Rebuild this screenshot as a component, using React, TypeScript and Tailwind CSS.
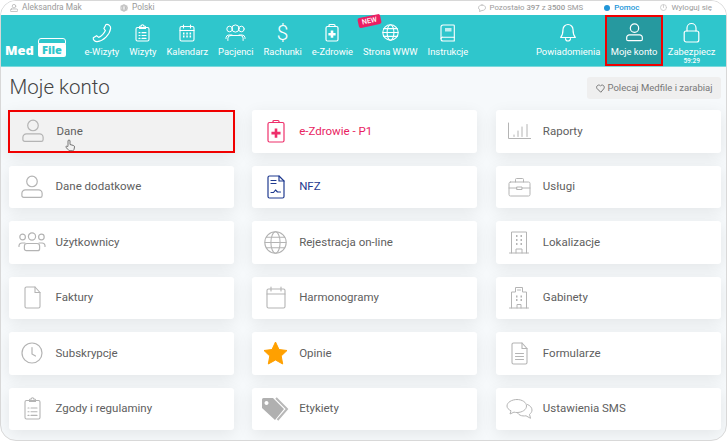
import React from "react";

const S = ({ w, h, children, className = "", sw = 1.1 }: { w: number; h: number; children: React.ReactNode; className?: string; sw?: number }) => (
  <svg width={w} height={h} viewBox={`0 0 ${w} ${h}`} fill="none" stroke="currentColor" strokeWidth={sw} strokeLinecap="round" strokeLinejoin="round" className={className}>
    {children}
  </svg>
);

const Person = ({ w = 22, h = 24, sw = 1.2 }: { w?: number; h?: number; sw?: number }) => (
  <S w={w} h={h} sw={sw}>
    <circle cx={w / 2} cy={h * 0.27} r={h * 0.22} />
    <path d={`M${w * 0.2} ${h * 0.62}H${w * 0.8}a${w * 0.16} ${h * 0.15} 0 0 1 ${w * 0.16} ${h * 0.15}v${h * 0.08}a${w * 0.08} ${h * 0.08} 0 0 1 -${w * 0.08} ${h * 0.08}H${w * 0.12}a${w * 0.08} ${h * 0.08} 0 0 1 -${w * 0.08} -${h * 0.08}v-${h * 0.08}a${w * 0.16} ${h * 0.15} 0 0 1 ${w * 0.16} -${h * 0.15}z`} />
  </S>
);

const Users = ({ w = 28, h = 20, sw = 1.2 }: { w?: number; h?: number; sw?: number }) => (
  <S w={w} h={h} sw={sw}>
    <circle cx={w / 2} cy={4.5} r={3.6} />
    <circle cx={4.6} cy={5} r={2.8} />
    <circle cx={w - 4.6} cy={5} r={2.8} />
    <path d={`M${w / 2 - 5} 11.5h10a2.6 2.6 0 0 1 2.6 2.6v2.6a2 2 0 0 1-2 2H${w / 2 - 5.6}a2 2 0 0 1-2-2v-2.6a2.6 2.6 0 0 1 2.6-2.6z`} />
    <path d={`M1 14.5v-1a3 3 0 0 1 3-2.5h3`} />
    <path d={`M${w - 1} 14.5v-1a3 3 0 0 0-3-2.5h-3`} />
  </S>
);

const ClipList = ({ w = 16, h = 22, sw = 1.1 }: { w?: number; h?: number; sw?: number }) => (
  <S w={w} h={h} sw={sw}>
    <rect x="1" y="3.5" width={w - 2} height={h - 4.5} rx="1.5" />
    <path d={`M${w / 2 - 3} 3.5V3a1 1 0 0 1 1-1h.8a1.2 1.2 0 0 1 2.4 0h.8a1 1 0 0 1 1 1v1.5H${w / 2 - 3}z`} />
    <path d={`M4 ${h * 0.48}h1M7 ${h * 0.48}h${w - 11}M4 ${h * 0.64}h1M7 ${h * 0.64}h${w - 11}M4 ${h * 0.8}h1M7 ${h * 0.8}h${w - 11}`} />
  </S>
);

const ClipPlus = ({ w = 15, h = 21, fill = "currentColor" }: { w?: number; h?: number; fill?: string }) => (
  <S w={w} h={h} sw={1.2}>
    <rect x="1" y="3.5" width={w - 2} height={h - 4.5} rx="1.5" />
    <path d={`M${w / 2 - 3} 3.5V2.5a1 1 0 0 1 1-1h4a1 1 0 0 1 1 1v1`} />
    <path d={`M${w / 2} ${h * 0.4}v${h * 0.38}M${w / 2 - h * 0.19} ${h * 0.59}h${h * 0.38}`} stroke={fill} strokeWidth={2.6} strokeLinecap="butt" />
  </S>
);

const Globe = ({ d = 22, sw = 1.1 }: { d?: number; sw?: number }) => (
  <S w={d} h={d} sw={sw}>
    <circle cx={d / 2} cy={d / 2} r={d / 2 - 0.8} />
    <ellipse cx={d / 2} cy={d / 2} rx={d * 0.2} ry={d / 2 - 0.8} />
    <path d={`M1 ${d / 2}H${d - 1}M${d * 0.1} ${d * 0.27}H${d * 0.9}M${d * 0.1} ${d * 0.73}H${d * 0.9}`} />
  </S>
);

const Lock = () => (
  <S w={17} h={21} sw={1.2}>
    <rect x="1.2" y="9" width="14.6" height="11" rx="2" />
    <path d="M4 9V6a4.500 4.500 0 0 1 9 0v3" />
  </S>
);

const navLeft = [
  { t: "e-Wizyty", i: <S w={20} h={20} sw={1.2}><path d="M14 1.500c2.500-.6 5 1.500 4.600 4C17.800 11.500 11.500 18 5.200 18.600c-2.300.2-4.300-1.800-3.900-3.800l3.300-2.100 2.100 1.700c2.800-1.200 5.400-4 6.700-6.800l-1.500-2.100z" /></S> },
  { t: "Wizyty", i: <ClipList w={15} h={18} /> },
  { t: "Kalendarz", i: <S w={16} h={18} sw={1.1}><rect x="1" y="2.500" width="14" height="14.500" rx="1.500" /><path d="M1 6.500h14M4.500 1v3M11.500 1v3" /><path d="M4 9.500h1.500M7.300 9.500h1.500M10.600 9.500h1.500M4 12.500h1.500M7.300 12.500h1.500M10.600 12.500h1.500" strokeWidth={1.8} strokeLinecap="butt" /></S> },
  { t: "Pacjenci", i: <Users w={21} h={17} sw={1} /> },
  { t: "Rachunki", i: <span className="text-[21px] leading-[20px] font-light">$</span> },
  { t: "e-Zdrowie", i: <ClipPlus w={14} h={19} /> },
  { t: "Strona WWW", i: <Globe d={17} />, badge: true },
  { t: "Instrukcje", i: <S w={15} h={18} sw={1.1}><path d="M3 1h10.500a.8.8 0 0 1 .8.800V17H3a2 2 0 0 1-2-2V3a2 2 0 0 1 2-2z" /><path d="M1 14.500a1.800 1.800 0 0 1 2-1.300h11.300" /><rect x="5" y="4" width="6.500" height="3.500" fill="currentColor" stroke="none" opacity=".7" /></S> },
];

type Card = { t: string; i: React.ReactNode; c?: string; ic?: string };
const Bar = () => (
  <S w={24} h={18} sw={1}>
    <path d="M1.500 1v15.500H24" />
    <path d="M7 13v1.500M11 9v5.500M15 5v9.500M20 2.500v12" />
  </S>
);
const cards: Card[] = [
  { t: "Dane", i: <Person /> },
  { t: "e-Zdrowie - P1", i: <ClipPlus w={18} h={24} />, c: "text-[#e8235f]", ic: "text-[#ee2f6b]" },
  { t: "Raporty", i: <Bar /> },
  { t: "Dane dodatkowe", i: <Person /> },
  {
    t: "NFZ",
    i: (
      <S w={18} h={24} sw={1.2}>
        <path d="M2.500 1h9.500l5 5v15.500a1.500 1.500 0 0 1-1.500 1.500h-13A1.500 1.500 0 0 1 1 21.500V2.500A1.500 1.500 0 0 1 2.500 1z" />
        <path d="M12 1v5h5M4 5.500h5M4 8.500h5M4 17.500h2.500l2-2.500 2 2h3" />
      </S>
    ),
    c: "text-[#1f3a8f]",
    ic: "text-[#1f3a8f]",
  },
  {
    t: "Usługi",
    i: (
      <S w={23} h={20} sw={1}>
        <rect x="1" y="5" width="21" height="14" rx="1.500" />
        <path d="M7.500 5V2.500a1 1 0 0 1 1-1h6a1 1 0 0 1 1 1V5M1 11h8M14 11h8M9 10h5v2.500H9z" />
      </S>
    ),
  },
  { t: "Użytkownicy", i: <Users /> },
  { t: "Rejestracja on-line", i: <Globe d={23} sw={1.1} /> },
  {
    t: "Lokalizacje",
    i: (
      <S w={20} h={23} sw={1}>
        <path d="M2.500 22V1h15v21M.5 22h19" />
        <path d="M7 22v-4h6v4" />
        <path d="M7 5h1.500M11.500 5H13M7 9h1.500M11.500 9H13M7 13h1.500M11.500 13H13" strokeWidth={2} strokeLinecap="butt" />
      </S>
    ),
  },
  {
    t: "Faktury",
    i: (
      <S w={17} h={23} sw={1.1}>
        <path d="M2.500 1H11l5 5.500V20.500a1.500 1.500 0 0 1-1.500 1.500h-12A1.500 1.500 0 0 1 1 20.500V2.500A1.500 1.500 0 0 1 2.500 1z" />
        <path d="M11 1v5.500h5" />
      </S>
    ),
  },
  {
    t: "Harmonogramy",
    i: (
      <S w={20} h={23} sw={1.1}>
        <rect x="1" y="3" width="18" height="19" rx="1.500" />
        <path d="M1 8h18M5 1v4M15 1v4" />
      </S>
    ),
  },
  {
    t: "Gabinety",
    i: (
      <S w={20} h={23} sw={1}>
        <path d="M2.500 22V6h4V1.500h7V6h4v16M.5 22h19" />
        <path d="M8 22v-3.500h4V22M8.500 4h3" />
        <path d="M7 10.500h1.500M11.500 10.500H13M7 14h1.500M11.500 14H13" strokeWidth={2} strokeLinecap="butt" />
      </S>
    ),
  },
  {
    t: "Subskrypcje",
    i: (
      <S w={22} h={22} sw={1.2}>
        <circle cx="11" cy="11" r="10" />
        <path d="M11 5.500V12l3.500 2" />
      </S>
    ),
  },
  {
    t: "Opinie",
    i: (
      <svg width="25" height="24" viewBox="0 0 25 24">
        <path d="M12.500 1l3.500 7.500 8 1-5.800 5.500 1.500 8-7.200-4-7.200 4 1.500-8L1 9.500l8-1z" fill="#ffa000" stroke="#ffa000" strokeWidth="1" strokeLinejoin="round" />
      </svg>
    ),
  },
  {
    t: "Formularze",
    i: (
      <S w={17} h={23} sw={1.1}>
        <path d="M2.500 1H11l5 5.500V20.500a1.500 1.500 0 0 1-1.500 1.500h-12A1.500 1.500 0 0 1 1 20.500V2.500A1.500 1.500 0 0 1 2.500 1z" />
        <path d="M11 1v5.500h5M4.500 11.500h8M4.500 14.500h8M4.500 17.500h8" />
      </S>
    ),
  },
  { t: "Zgody i regulaminy", i: <ClipList w={17} h={23} /> },
  {
    t: "Etykiety",
    i: (
      <svg width="29" height="24" viewBox="0 0 29 24">
        <path fillRule="evenodd" d="M1 2.500A1.500 1.500 0 0 1 2.500 1H12l11 11-9 11L1 11zM5.500 4a2 2 0 1 0 .01 0z" fill="#b0b0b0" />
        <path d="M15 1l11 11-9.500 11" fill="none" stroke="#b8b8b8" strokeWidth="2" />
      </svg>
    ),
  },
  {
    t: "Ustawienia SMS",
    i: (
      <S w={27} h={22} sw={1}>
        <path d="M11 1.500c5.500 0 9.500 3 9.500 6.500s-4 6.500-9.500 6.500c-1 0-2-.1-3-.4L4 16l1-3.200C2.500 11.500 1 10 1 8c0-3.500 4.500-6.500 10-6.500z" />
        <path d="M21.500 6.500c2.500 1 4.500 3 4.500 5.500 0 1.800-1 3.300-2.500 4.300l1 4-4.500-2.500c-1 .2-2 .2-3 .1-2-.1-4-1-5.200-2.500" />
      </S>
    ),
  },
];

export default function App() {
  return (
    <div className="w-[727px] h-[443px] bg-white overflow-hidden font-['Roboto',sans-serif]">
      <div className="h-[441px] rounded-[16px] border-[1.5px] border-[#d8d8d8] overflow-hidden bg-[#f6f9fb] flex flex-col">
        <div className="h-[13.500px] flex items-center bg-white text-[8.400px] text-[#9a9a9a] pl-[9px] pr-[14px] shrink-0">
          <span className="mr-1 text-[#b5b5b5]"><Person w={8} h={8} sw={0.8} /></span>
          <span className="w-[98px]">Aleksandra Mak</span>
          <span className="mr-1 text-[#b5b5b5]"><Globe d={8} sw={0.7} /></span>
          <span>Polski</span>
          <span className="ml-auto mr-1 text-[#b5b5b5]">
            <S w={8} h={8} sw={0.8}><path d="M4 1c2 0 3.500 1.200 3.500 2.800S6 6.500 4 6.500l-2.500 1 .4-1.600C1 5.300.5 4.600.5 3.800.5 2.200 2 1 4 1z" /></S>
          </span>
          <span className="text-[7.800px]">Pozostało <b className="font-medium">397</b> z <b className="font-medium">3500</b> SMS</span>
          <span className="ml-[21px] w-[6px] h-[6px] rounded-full bg-[#2196d8] mr-1" />
          <span className="text-[8px] text-[#2196d8] font-medium">Pomoc</span>
          <span className="ml-[21px] mr-1 text-[#c5c5c5]"><S w={7} h={7} sw={0.8}><circle cx="3.500" cy="3.500" r="3" /><path d="M3.500 1v2.500" /></S></span>
          <span className="text-[8px]">Wyloguj się</span>
        </div>
        <div className="h-[52px] shrink-0 bg-[#2fc6cc] flex items-stretch text-white pl-[3px] pr-[5.500px] border-b border-[#7ad9dc]">
          <div className="w-[75.500px] shrink-0 flex items-end pb-[9px] font-['Open_Sans',sans-serif] font-extrabold text-[13px] leading-none pl-[1px]">
            <span>Med</span>
            <span className="ml-[4px] relative flex items-center justify-center w-[28px] h-[14px] bg-white rounded-[2px] text-[#2fc6cc] text-[11px] leading-none before:content-[''] before:absolute before:left-[0px] before:top-[-5px] before:w-[28px] before:h-[6px] before:rounded-t-[3px] before:border-[1.500px] before:border-white">File</span>
          </div>
          {navLeft.map((n) => (
            <div key={n.t} className="relative flex flex-col items-center px-[5px] pt-[7px]">
              <div className="h-[22px] flex items-center justify-center">{n.i}</div>
              <span className="text-[9.400px] leading-[12px] mt-[2.500px] whitespace-nowrap">{n.t}</span>
              {n.badge && (
                <span className="absolute left-[0px] top-[1.500px] -rotate-12 bg-[#ec1f63] text-white text-[7px] leading-[10px] px-[4px] rounded-[2px] font-medium">NEW</span>
              )}
            </div>
          ))}
          <div className="ml-auto flex flex-col items-center px-[5px] pt-[7px]">
            <div className="h-[22px] flex items-center"><S w={16} h={19} sw={1.2}><path d="M8 1.500a5 5 0 0 1 5 5c0 5 1 6.500 2.300 8H.7C2 13 3 11.500 3 6.500a5 5 0 0 1 5-5zM5.500 15.500a2.500 2.500 0 0 0 5 0" /></S></div>
            <span className="text-[9.400px] leading-[12px] mt-[2.500px] whitespace-nowrap">Powiadomienia</span>
          </div>
          <div className="w-[57.500px] flex flex-col items-center pt-[5px] bg-[#26999f] border-2 border-[#f00000]">
            <div className="h-[22px] flex items-center"><Person w={17} h={19} sw={1.2} /></div>
            <span className="text-[9.400px] leading-[12px] mt-[2.500px] whitespace-nowrap">Moje konto</span>
          </div>
          <div className="flex flex-col items-center px-[5px] pt-[7px]">
            <div className="h-[22px] flex items-center"><Lock /></div>
            <span className="text-[9.400px] leading-[12px] mt-[2.500px] whitespace-nowrap">Zabezpiecz</span>
            <span className="text-[6.500px] leading-[7px] font-medium">59:29</span>
          </div>
        </div>
        <div className="flex-1 pl-[7.500px] pr-[5px]">
          <div className="h-[43.500px] flex items-center justify-between">
            <h1 className="text-[20.500px] font-light text-[#444] pl-[1px] pb-[2px]">Moje konto</h1>
            <div className="h-[22px] w-[134px] bg-[#efefef] rounded-[3px] flex items-center justify-center gap-[3px] text-[9.500px] text-[#777]">
              <S w={9} h={9} sw={1}><path d="M4.500 8L1 4.500C-.5 2.500 2.500-.5 4.500 2c2-2.500 5 .5 3.500 2.500z" /></S>
              <span>Polecaj Medfile i zarabiaj</span>
            </div>
          </div>
          <div className="grid grid-cols-3 gap-x-[18.500px] gap-y-[13px]">
            {cards.map((c) => {
              const active = c.t === "Dane";
              return (
                <div
                  key={c.t}
                  className={
                    active
                      ? "relative h-[42.500px] flex items-center bg-[#f2f2f2] border-2 border-[#f00000] shadow-[0_4px_16px_rgba(0,0,0,0.08)] -ml-[1px] -mr-[1px]"
                      : "relative h-[42.500px] flex items-center bg-white rounded-[3px] shadow-[0_4px_16px_rgba(0,0,0,0.08)]"
                  }
                >
                  <div className={`w-[47px] shrink-0 flex justify-center ${c.ic ?? "text-[#b4b4b4]"}`}>{c.i}</div>
                  <span className={`text-[11.500px] font-normal ${c.c ?? "text-[#606060]"}`}>{c.t}</span>
                  {active && (
                    <span className="absolute left-[55px] top-[27px] text-[#666]">
                      <S w={10} h={13} sw={0.9}><path d="M3 6V2a1 1 0 0 1 2 0v3.500l3.500 1c.8.3 1 .8 1 1.500l-.5 2.500c-.2.800-.7 1.200-1.500 1.200H5c-.7 0-1.200-.3-1.600-.9L1 8.500c-.5-1 .5-2 1.500-1.200z" /></S>
                    </span>
                  )}
                </div>
              );
            })}
          </div>
        </div>
      </div>
    </div>
  );
}
